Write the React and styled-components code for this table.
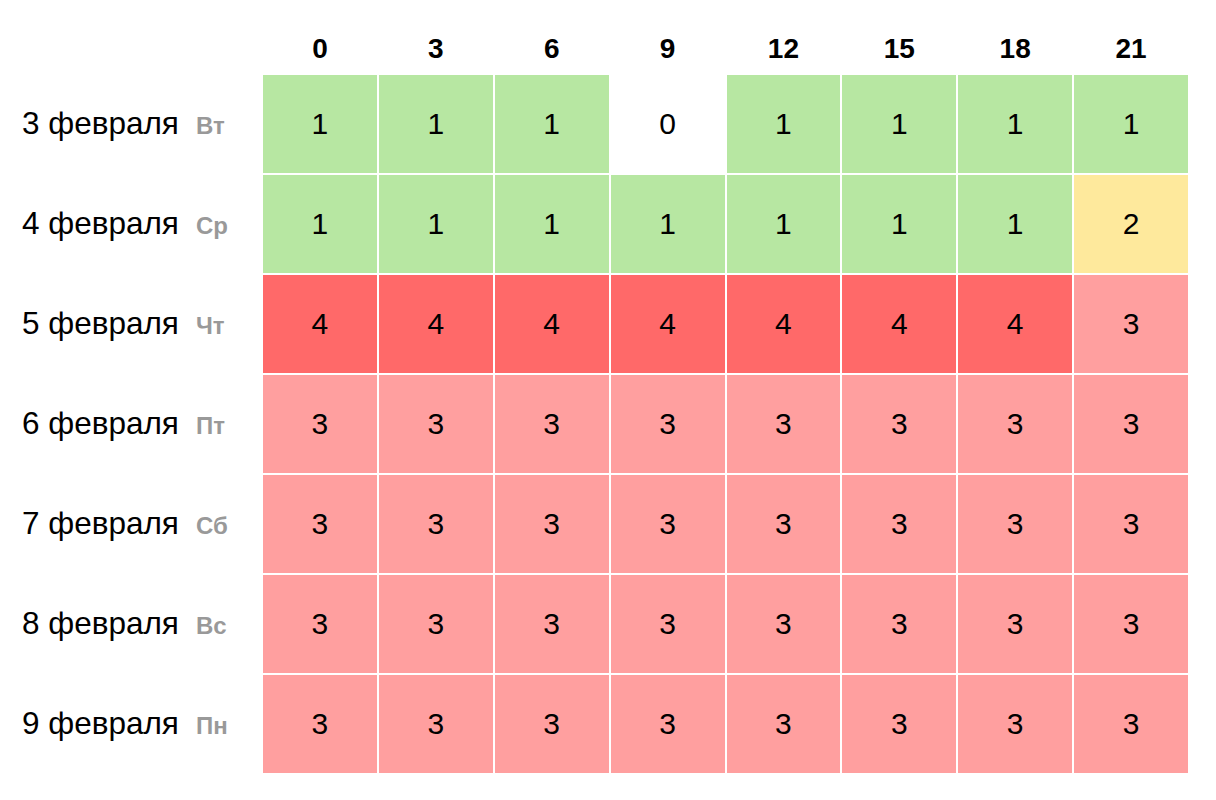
import React from "react";
import styled, { createGlobalStyle } from "styled-components";

const GlobalStyle = createGlobalStyle`
  body {
    margin: 0;
    background: #ffffff;
    font-family: "Liberation Sans", Arial, sans-serif;
  }
`;

const hours = [0, 3, 6, 9, 12, 15, 18, 21];

const days = [
  { date: "3 февраля", wd: "Вт", values: [1, 1, 1, 0, 1, 1, 1, 1] },
  { date: "4 февраля", wd: "Ср", values: [1, 1, 1, 1, 1, 1, 1, 2] },
  { date: "5 февраля", wd: "Чт", values: [4, 4, 4, 4, 4, 4, 4, 3] },
  { date: "6 февраля", wd: "Пт", values: [3, 3, 3, 3, 3, 3, 3, 3] },
  { date: "7 февраля", wd: "Сб", values: [3, 3, 3, 3, 3, 3, 3, 3] },
  { date: "8 февраля", wd: "Вс", values: [3, 3, 3, 3, 3, 3, 3, 3] },
  { date: "9 февраля", wd: "Пн", values: [3, 3, 3, 3, 3, 3, 3, 3] },
];

const levelColors = {
  0: "#ffffff",
  1: "#b7e7a2",
  2: "#fee99c",
  3: "#ff9f9f",
  4: "#ff6969",
};

const Table = styled.div`
  display: grid;
  grid-template-columns: 261px repeat(8, 1fr);
  grid-template-rows: 49px repeat(7, 98px);
  gap: 2px;
  width: 1188px;
  padding-top: 24px;
  box-sizing: border-box;
`;

const Corner = styled.div``;

const HourHead = styled.div`
  display: flex;
  align-items: center;
  justify-content: center;
  font-size: 28px;
  font-weight: 700;
  color: #000;
`;

const RowLabel = styled.div`
  display: flex;
  align-items: center;
  padding-left: 22px;
  white-space: nowrap;
`;

const LabelText = styled.div`
  line-height: 1;
`;

const DateText = styled.span`
  font-size: 31.5px;
  color: #000;
`;

const Weekday = styled.span`
  margin-left: 17px;
  font-size: 24px;
  font-weight: 700;
  color: #999999;
`;

const Cell = styled.div`
  display: flex;
  align-items: center;
  justify-content: center;
  background: ${({ $level }) => levelColors[$level]};
  font-size: 30px;
  color: #000;
`;

const App = () => {
  return (
    <>
      <GlobalStyle />
      <Table>
        <Corner />
        {hours.map((h) => (
          <HourHead key={h}>{h}</HourHead>
        ))}
        {days.map((d) => (
          <React.Fragment key={d.date}>
            <RowLabel>
              <LabelText>
                <DateText>{d.date}</DateText>
                <Weekday>{d.wd}</Weekday>
              </LabelText>
            </RowLabel>
            {d.values.map((v, i) => (
              <Cell key={i} $level={v}>
                {v}
              </Cell>
            ))}
          </React.Fragment>
        ))}
      </Table>
    </>
  );
};

export default App;
